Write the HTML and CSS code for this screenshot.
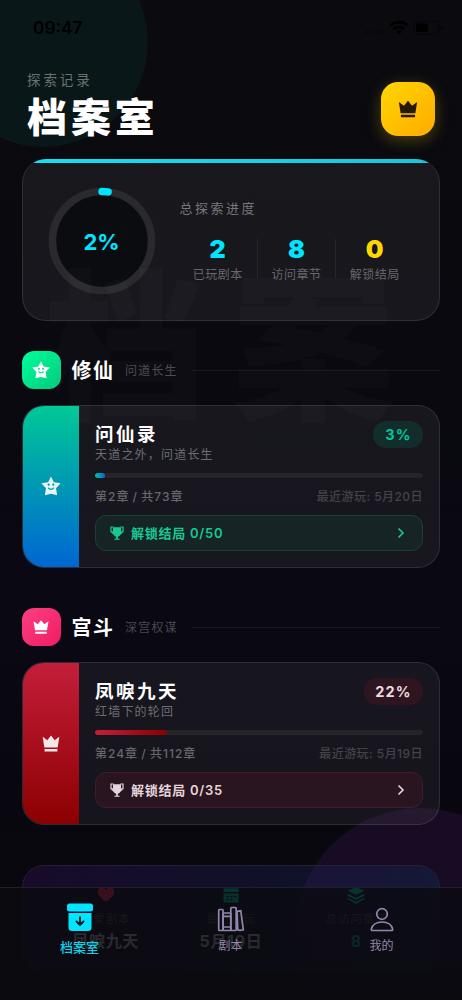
FILE: index.html
```html
<!DOCTYPE html>
<html lang="zh-CN">
<head>
<meta charset="utf-8">
<title>档案室</title>
<link rel="stylesheet" href="styles.css">
</head>
<body>
<svg width="0" height="0" class="defs">
  <symbol id="crown" viewBox="0 0 24 24"><path d="M2 3.500l5.600 4.500L12 2l4.400 6 5.600-4.500-2 13.500H4zM4.300 19h15.400v3H4.300z"/></symbol>
  <symbol id="star" viewBox="0 0 24 24"><path fill-rule="evenodd" stroke-linejoin="round" d="M12 1.500l3.200 6.400 7.300 1.200-5 5.300 1.200 7.600-6.700-1.500-6.700 1.500 1.200-7.600-5-5.300 7.300-1.200zM8.300 10.500a1.200 1.200 0 1 0 2.400 0a1.200 1.200 0 1 0-2.400 0zM13.300 10.500a1.200 1.200 0 1 0 2.400 0a1.200 1.200 0 1 0-2.400 0zM8.500 13.800c1 3.200 6 3.200 7 0l-1.300-.3c-.9 1.700-3.500 1.700-4.400 0z"/></symbol>
  <symbol id="trophy" viewBox="0 0 24 24"><path d="M6 3.500h12V12c0 3-2.800 5.200-4.700 5.700V20.500H16V22H8v-1.500h2.700v-2.800C8.800 17.200 6 15 6 12z"/><path d="M6.500 10.500L3 10V3h4M17.500 10.500L21 10V3h-4M3.500 10.500L7 13.500M20.500 10.500L17 13.500" fill="none" stroke="currentColor" stroke-width="1.800"/></symbol>
</svg>
<div class="app">
  <div class="orb orb-teal"></div>
  <div class="orb orb-purple"></div>
  <div class="statusbar">
    <span>09:47</span>
    <svg width="82" height="16" viewBox="0 0 82 16">
      <g fill="#07070b"><circle cx="5" cy="12" r="1.700"/><circle cx="11" cy="12" r="1.700"/><circle cx="17" cy="12" r="1.700"/><circle cx="22" cy="12" r="1.700"/></g>
      <g fill="none" stroke="#000" stroke-width="2.600"><path d="M28.500 5.500a12.500 12.500 0 0 1 17 0M31.700 9a8 8 0 0 1 10.600 0"/></g><path d="M34 11.600a4.600 4.600 0 0 1 6 0l-3 3z"/>
      <rect x="52" y="1.500" width="25" height="12.500" rx="4" fill="none" stroke="#050508"/><rect x="54" y="3.500" width="12" height="8.500" rx="2"/><path d="M79 6v4l2-2z" fill="#050508"/>
    </svg>
  </div>
  <header class="header">
    <div><div class="eyebrow">探索记录</div><h1>档案室</h1></div>
    <div class="crown-btn"><svg width="22" height="20" viewBox="0 0 24 24" preserveAspectRatio="none"><use href="#crown"/></svg></div>
  </header>
  <section class="card overview">
    <div class="ring">
      <svg width="108" height="108" viewBox="0 0 108 108"><circle cx="54" cy="54" r="49.500" fill="#0b0c0f" stroke="#29292e" stroke-width="7.500"/><circle cx="54" cy="54" r="49.500" fill="none" stroke="#00e5ff" stroke-width="7.500" stroke-linecap="round" stroke-dasharray="6.200 400" transform="rotate(-90 54 54)"/></svg>
      <span>2%</span>
    </div>
    <div class="overview-main">
      <div class="overview-title">总探索进度</div>
      <div class="stats">
        <div class="stat"><b>2</b><span>已玩剧本</span></div>
        <div class="stat"><b>8</b><span>访问章节</span></div>
        <div class="stat gold"><b>0</b><span>解锁结局</span></div>
      </div>
    </div>
  </section>

  <section class="group green">
    <div class="group-head"><div class="group-icon"><svg width="20" height="20"><use href="#star"/></svg></div><h2>修仙</h2><small>问道长生</small><i></i></div>
    <article class="card story">
      <div class="spine"><svg width="22" height="22"><use href="#star"/></svg></div>
      <div class="story-body">
        <div class="story-top"><div><h3>问仙录</h3><p>天道之外，问道长生</p></div><div class="badge">3%</div></div>
        <div class="bar"><div style="width:3%"></div></div>
        <div class="meta"><span>第2章 / 共73章</span><span>最近游玩: 5月20日</span></div>
        <div class="endings"><svg class="cup" width="16" height="16"><use href="#trophy"/></svg><span>解锁结局 0/50</span><svg class="chev" width="8" height="12" viewBox="0 0 8 12"><path d="M1.500 1.500L6 6l-4.500 4.500"/></svg></div>
      </div>
    </article>
  </section>

  <section class="group red">
    <div class="group-head"><div class="group-icon"><svg width="18" height="16" viewBox="0 0 24 24" preserveAspectRatio="none"><use href="#crown"/></svg></div><h2>宫斗</h2><small>深宫权谋</small><i></i></div>
    <article class="card story">
      <div class="spine"><svg width="20" height="19" viewBox="0 0 24 24" preserveAspectRatio="none"><use href="#crown"/></svg></div>
      <div class="story-body">
        <div class="story-top"><div><h3>凤唳九天</h3><p>红墙下的轮回</p></div><div class="badge">22%</div></div>
        <div class="bar"><div style="width:22%"></div></div>
        <div class="meta"><span>第24章 / 共112章</span><span>最近游玩: 5月19日</span></div>
        <div class="endings"><svg class="cup" width="16" height="16"><use href="#trophy"/></svg><span>解锁结局 0/35</span><svg class="chev" width="8" height="12" viewBox="0 0 8 12"><path d="M1.500 1.500L6 6l-4.500 4.500"/></svg></div>
      </div>
    </article>
  </section>

  <section class="summary">
    <div><svg width="18" height="18" viewBox="0 0 24 24" fill="#ff2d55"><path d="M12 21C5 16 1 12 1 7.500 1 1.500 9 0 12 5.500 15 0 23 1.500 23 7.500 23 12 19 16 12 21z"/></svg><span>最爱剧本</span><b>凤唳九天</b></div>
    <div><svg width="18" height="18" viewBox="0 0 24 24" fill="#00e0b8"><path fill-rule="evenodd" d="M2 3h20v5H2zM2 10h20v12H2zM6 13v2h3v-2zm5 0v2h3v-2zm5 0v2h3v-2zM6 17v2h3v-2zm5 0v2h3v-2z"/></svg><span>最近游玩</span><b>5月19日</b></div>
    <div><svg width="18" height="18" viewBox="0 0 24 24" fill="#00e0a0"><path d="M12 1l11 5.500L12 12 1 6.500zM1 10l11 5.500L23 10v3l-11 5.500L1 13zM1 15.500L12 21l11-5.500v2L12 24 1 17.500z"/></svg><span>总访问章节</span><b class="teal">8</b></div>
  </section>

  <div class="watermark">档案</div>

  <nav class="tabs">
    <div class="tab active"><svg width="28" height="29" viewBox="0 0 28 29"><rect x="1" y="0.500" width="26" height="8" rx="2.500" fill="currentColor"/><path d="M2.500 10h23v14.500a3.500 3.500 0 0 1-3.500 3.500H6a3.500 3.500 0 0 1-3.500-3.500z" fill="currentColor"/><path d="M14 13.500v8M10 18l4 4 4-4" fill="none" stroke="#0a1218" stroke-width="1.800"/></svg><span>档案室</span></div>
    <div class="tab"><svg width="28" height="29" viewBox="0 0 28 29" fill="none" stroke="currentColor" stroke-width="1.700"><rect x="1.700" y="6.500" width="4.400" height="21" rx=".8"/><rect x="6.100" y="10" width="7.700" height="17.500" rx=".8"/><path d="M6.500 13.300h7M6.500 24h7"/><rect x="13.800" y="4.500" width="5.400" height="23" rx=".8"/><path d="M20 8.300l3.800-.5 2.500 19-3.500.5-2-.5z"/></svg><span>剧本</span></div>
    <div class="tab"><svg width="28" height="29" viewBox="0 0 28 29" fill="none" stroke="currentColor" stroke-width="1.700"><circle cx="14" cy="11" r="5.300"/><path d="M4.400 27.500c-1 0-1.200-.8-1-1.500C4.700 21.200 8.500 19 14 19s9.300 2.200 10.600 7c.2.700 0 1.500-1 1.500z"/></svg><span>我的</span></div>
  </nav>
</div>
</body>
</html>
```
FILE: styles.css
```css
* { box-sizing: border-box; margin: 0; padding: 0; }
body { font-family: Inter, "Noto Sans CJK SC", sans-serif; background: #0a0a0f; color: #fff; }
svg { display: block; flex: none; }
svg use { fill: currentColor; }
.defs { position: absolute; }
.app { position: relative; width: 462px; height: 1000px; overflow: hidden; padding: 0 22px; background: linear-gradient(180deg, #0a0a0f 0%, #09090f 40%, #0a0813 62%, #08070f 80%, #0a0a0f 100%); }
.orb { position: absolute; border-radius: 50%; }
.orb-teal { left: -62px; top: -63px; width: 210px; height: 210px; background: #0a1718; }
.orb-purple { left: 295px; top: 808px; width: 250px; height: 250px; background: #180b24; }
.statusbar { position: relative; display: flex; justify-content: space-between; align-items: center; height: 55px; padding-left: 11px; font-weight: 600; font-size: 17.300px; color: #000; }
.statusbar svg { margin-right: -4px; }
.header { position: relative; display: flex; justify-content: space-between; height: 104px; padding: 15px 5px 0; }
.eyebrow { height: 20px; line-height: 20px; font-size: 13.500px; letter-spacing: 2.900px; color: #6a7173; }
h1 { margin-top: 2px; font-size: 40px; line-height: 52px; font-weight: 900; letter-spacing: 3.900px; }
.crown-btn { display: flex; align-items: center; justify-content: center; width: 54px; height: 54px; margin-top: 12px; border-radius: 17px; background: linear-gradient(135deg, #ffd700, #ffaa00); color: #261a05; box-shadow: 0 4px 16px rgba(255, 215, 0, .27); }
.card { position: relative; border: 1px solid rgba(255, 255, 255, .1); border-radius: 22px; background: rgba(255, 255, 255, .06); overflow: hidden; }
.overview { display: flex; height: 161.500px; padding: 28px 24px 0 24.500px; border-radius: 24px; border-top: 0; }
.overview::before { content: ""; position: absolute; left: 0; right: 0; top: 0; height: 4px; background: linear-gradient(90deg, #15dff6, #18c6dc); }
.ring { position: relative; width: 108px; height: 108px; }
.ring span { position: absolute; inset: 0; text-align: center; line-height: 110px; font-size: 22px; font-weight: 700; color: #00e5ff; }
.overview-main { flex: 1; padding: 10px 0 0 24px; }
.overview-title { height: 22px; line-height: 22px; font-size: 13px; letter-spacing: 2.500px; color: #77777b; }
.stats { display: flex; margin: 20px 0 0 -1px; }
.stat { flex: 0 0 78.300px; height: 39px; text-align: center; }
.stat + .stat { border-left: 1px solid #25252a; }
.stat b { display: block; height: 18px; line-height: 20px; font-size: 25px; font-weight: 900; color: #00e5ff; }
.stat.gold b { color: #ffd700; }
.stat span { display: block; margin-top: 9px; line-height: 18px; font-size: 12px; letter-spacing: .500px; color: #67676b; white-space: nowrap; }
.group { position: relative; height: 257px; padding-top: 30px; }
.group-head { display: flex; align-items: center; height: 39px; }
.group-icon { display: flex; align-items: center; justify-content: center; width: 38.500px; height: 38.500px; border-radius: 12px; }
.green .group-icon { background: linear-gradient(135deg, #00ff9d, #00c97a); }
.red .group-icon { background: linear-gradient(135deg, #ff3f83, #ed1c62); }
h2 { margin-left: 11px; margin-top: 2px; font-size: 20px; font-weight: 700; letter-spacing: 1.500px; line-height: 28px; }
small { margin-left: 10.500px; margin-top: -1px; font-size: 12px; letter-spacing: 1.200px; color: #49494f; }
.group-head i { flex: 1; height: 1px; margin-left: 14px; background: #17171c; }
.story { display: flex; height: 163px; margin-top: 15px; }
.spine { display: flex; align-items: center; justify-content: center; width: 56px; color: rgba(255, 255, 255, .9); }
.green .spine { background: linear-gradient(180deg, #00c896, #0066d2); }
.red .spine { background: linear-gradient(180deg, #c41e3a, #8b0000); }
.story-body { flex: 1; padding: 15px 16px 0; }
.story-top { display: flex; justify-content: space-between; height: 52px; }
h3 { height: 26px; line-height: 26px; font-size: 18.500px; font-weight: 700; letter-spacing: 2.500px; }
.story p { height: 16px; line-height: 15px; font-size: 12px; letter-spacing: 1.200px; color: #6d6d72; }
.badge { height: 27px; line-height: 27px; padding: 0 11.500px; border-radius: 13px; font-size: 14.500px; font-weight: 700; letter-spacing: 1.100px; }
.green .badge { padding-left: 12px; background: #122d2b; color: #00c896; }
.red .badge { background: #2f151f; color: #eddce1; }
.bar { height: 5px; border-radius: 3px; background: #252529; overflow: hidden; }
.bar div { height: 100%; border-radius: 3px; }
.green .bar div { background: linear-gradient(90deg, #00c896, #0066d2); }
.red .bar div { background: linear-gradient(90deg, #c41e3a, #8b0000); }
.meta { display: flex; justify-content: space-between; height: 37px; line-height: 38px; font-size: 12px; letter-spacing: 1px; word-spacing: -1px; font-weight: 500; color: #67676c; }
.meta span + span { color: #434348; letter-spacing: .450px; word-spacing: 0; }
.endings { display: flex; align-items: center; height: 36px; padding: 0 17px 0 13px; border: 1px solid; border-radius: 11px; font-size: 13px; font-weight: 600; letter-spacing: .750px; }
.endings span { margin-left: 6px; flex: 1; }
.green .endings { background: #162426; border-color: #164237; color: #16c993; }
.red .endings { background: #29151f; border-color: #451b2a; color: #e4d5da; }
.chev path { fill: none; stroke: currentColor; stroke-width: 1.600; }
.summary { position: relative; display: grid; grid-template-columns: repeat(3, 1fr); height: 107px; margin-top: 30.500px; padding: 20px 20px 0; border: 1px solid #24202f; border-radius: 22px; background: linear-gradient(90deg, rgba(80, 20, 140, .22), rgba(12, 62, 112, .25)); }
.summary div { display: flex; flex-direction: column; align-items: center; }
.summary span { height: 18px; margin-top: 6px; line-height: 18px; font-size: 11.500px; letter-spacing: .800px; color: #55555e; }
.summary b { margin-top: 2px; line-height: 22px; font-size: 16px; letter-spacing: .700px; color: #ddd; }
.summary .teal { color: #00c9a7; }
.watermark { position: absolute; left: 43px; top: 248px; font-size: 163px; line-height: 200px; font-weight: 900; letter-spacing: 26px; color: rgba(255, 255, 255, .018); white-space: nowrap; }
.tabs { position: absolute; left: 0; right: 0; top: 887px; height: 113px; display: grid; grid-template-columns: repeat(3, 151px); padding: 15px 4px 0; border-top: 1px solid #202127; background: linear-gradient(180deg, rgba(10, 10, 15, .81), rgba(10, 10, 15, .87) 70%, #0a0a0f); }
.tab { display: flex; flex-direction: column; align-items: center; color: #9486aa; }
.tab span { margin-top: 5px; line-height: 18px; font-size: 12px; }
.tab.active { color: #00e5ff; }
.tab.active span { margin-top: 6px; font-size: 13px; font-weight: 500; color: #10d2e6; }
```
